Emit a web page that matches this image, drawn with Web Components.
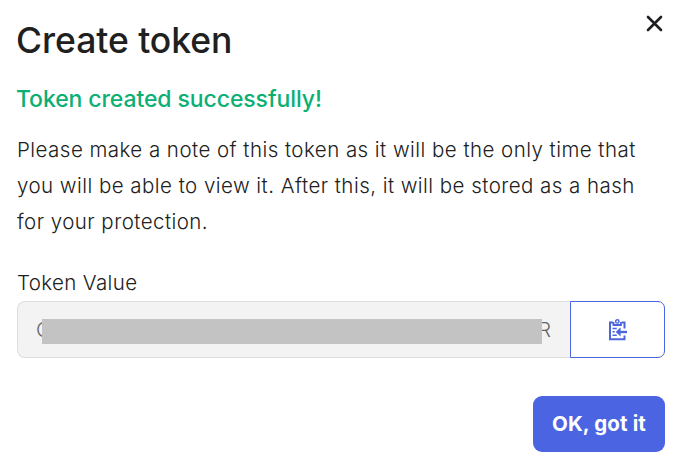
<!DOCTYPE html>
<html lang="en">
<head>
<meta charset="UTF-8">
<title>Create token</title>
<style>
  body {
    margin: 0;
    background: #fff;
    color: #202020;
    font-family: Inter, "Liberation Sans", sans-serif;
  }
</style>
</head>
<body>
<token-dialog>
  <span slot="title">Create token</span>
  <span slot="status">Token created successfully!</span>
  <span slot="message">Please make a note of this token as it will be the only time that<br>you will be able to view it. After this, it will be stored as a hash<br>for your protection.</span>
  <token-field slot="field" label="Token Value" start="C" end="R"></token-field>
  <primary-button slot="actions">OK, got it</primary-button>
</token-dialog>

<script>
class TokenDialog extends HTMLElement {
  constructor() {
    super();
    this.attachShadow({ mode: 'open' });
  }

  connectedCallback() {
    this.render();
  }

  render() {
    this.shadowRoot.innerHTML = `
      <style>
        :host {
          display: block;
          box-sizing: border-box;
          width: 681px;
          height: 463px;
          padding: 15px 16px 0 17px;
        }
        header {
          display: flex;
          justify-content: space-between;
          height: 52px;
        }
        h1 {
          margin: 0 0 0 -1px;
          font-size: 35.5px;
          line-height: 51px;
          font-weight: 500;
          letter-spacing: -0.05px;
          white-space: nowrap;
        }
        .close {
          width: 20px;
          height: 18px;
          padding: 0;
          border: 0;
          background: none;
        }
        .close svg {
          display: block;
        }
        h2 {
          margin: 17px 0 0 -1px;
          font-size: 23px;
          line-height: 30px;
          font-weight: 500;
          letter-spacing: -0.1px;
          color: #0caf74;
          white-space: nowrap;
        }
        p {
          margin: 18px 0 0;
          font-size: 20.5px;
          line-height: 36px;
          font-weight: 300;
          letter-spacing: 0.46px;
          white-space: nowrap;
        }
        .field {
          margin-top: 25px;
        }
        footer {
          display: flex;
          justify-content: flex-end;
          margin-top: 38px;
        }
      </style>
      <header>
        <h1><slot name="title"></slot></h1>
        <button class="close" aria-label="Close">
          <svg width="20" height="18" viewBox="0 0 20 18">
            <path d="M3 2 16 15M16 2 3 15" fill="none" stroke="#202024" stroke-width="2.6" stroke-linecap="round"/>
          </svg>
        </button>
      </header>
      <h2><slot name="status"></slot></h2>
      <p><slot name="message"></slot></p>
      <div class="field"><slot name="field"></slot></div>
      <footer><slot name="actions"></slot></footer>
    `;
  }
}

class TokenField extends HTMLElement {
  constructor() {
    super();
    this.attachShadow({ mode: 'open' });
  }

  connectedCallback() {
    this.render();
  }

  render() {
    this.shadowRoot.innerHTML = `
      <style>
        :host {
          display: block;
          font-size: 20.5px;
          font-weight: 300;
        }
        label {
          display: block;
          height: 36px;
          line-height: 36px;
          letter-spacing: 0.36px;
        }
        .group {
          display: flex;
          height: 57px;
        }
        .value {
          position: relative;
          box-sizing: border-box;
          display: flex;
          flex: 1;
          align-items: center;
          justify-content: space-between;
          padding: 0 19px 0 18px;
          border: 1px solid #dedede;
          border-right: 0;
          border-radius: 8px 0 0 8px;
          background: #f3f3f3;
          color: #666;
        }
        /* bar that hides all but the ends of the token */
        .mask {
          position: absolute;
          top: 17px;
          left: 24px;
          width: 500px;
          height: 25px;
          background: #c3c3c3;
        }
        .copy {
          box-sizing: border-box;
          display: flex;
          align-items: center;
          justify-content: center;
          width: 95px;
          padding: 0;
          border: 1px solid #4b64e1;
          border-radius: 0 7px 7px 0;
          background: #fff;
          color: #4b64e1;
        }
      </style>
      <label>${this.getAttribute('label')}</label>
      <div class="group">
        <div class="value">
          <span>${this.getAttribute('start')}</span>
          <span>${this.getAttribute('end')}</span>
          <div class="mask"></div>
        </div>
        <button class="copy" aria-label="Copy"><paste-icon></paste-icon></button>
      </div>
    `;
  }
}

class PasteIcon extends HTMLElement {
  constructor() {
    super();
    this.attachShadow({ mode: 'open' });
    this.shadowRoot.innerHTML = `
      <style>
        :host {
          display: block;
          width: 20px;
          height: 22px;
        }
        svg {
          display: block;
        }
      </style>
      <svg width="20" height="22" viewBox="0 0 20 22" fill="none" stroke="currentColor">
        <path d="M5 3.5H2V20.2H16.5V16.5M13.5 3.5H16.5V9.5" stroke-width="2"/>
        <path d="M5.5 3V6H13V3" stroke-width="1.8"/>
        <circle cx="9.3" cy="2.4" r="1.7" stroke-width="1.4"/>
        <path d="M4.5 9.5H8.8M4.5 12.8H6.8M4.5 16.3H8.8" stroke-width="1.6"/>
        <path d="M12 9.8 8.6 13 12 16.2Z" fill="currentColor" stroke-width="1.2"/>
        <path d="M10 13H19" stroke-width="2.4"/>
      </svg>
    `;
  }
}

class PrimaryButton extends HTMLElement {
  constructor() {
    super();
    this.attachShadow({ mode: 'open' });
    this.shadowRoot.innerHTML = `
      <style>
        :host {
          display: block;
        }
        button {
          width: 132px;
          height: 56px;
          padding: 0 0 2px;
          border: 0;
          border-radius: 9px;
          background: #4b64e1;
          color: #fff;
          font-family: inherit;
          font-size: 20.5px;
          font-weight: 700;
          letter-spacing: 0.15px;
          white-space: nowrap;
        }
      </style>
      <button><slot></slot></button>
    `;
  }
}

customElements.define('paste-icon', PasteIcon);
customElements.define('primary-button', PrimaryButton);
customElements.define('token-field', TokenField);
customElements.define('token-dialog', TokenDialog);
</script>
</body>
</html>
